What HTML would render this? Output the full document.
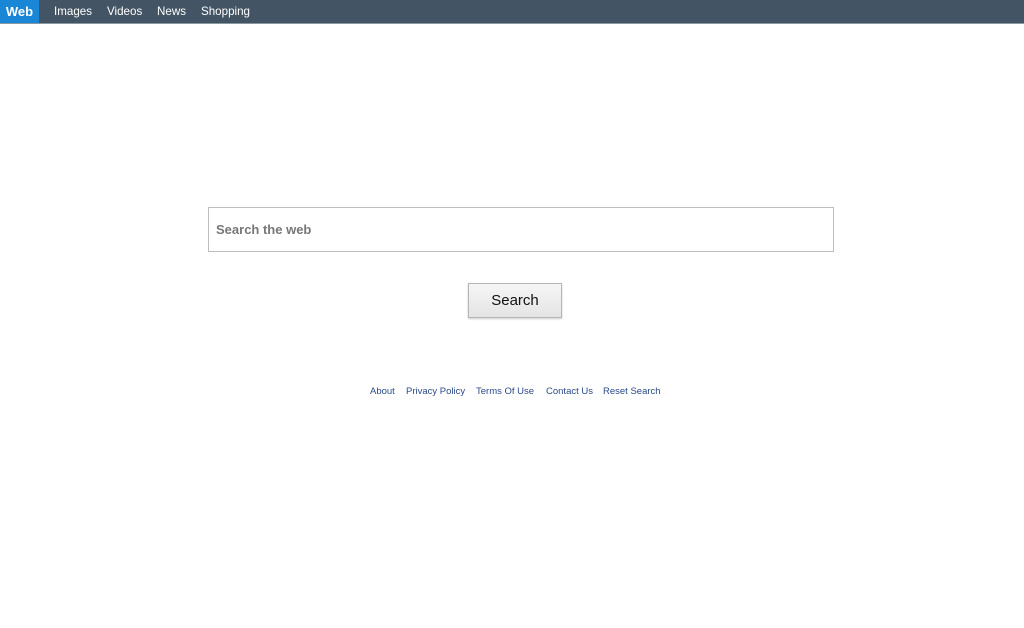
<!DOCTYPE html>
<html><head><meta charset="utf-8"><style>
body{margin:0;width:1024px;height:628px;background:#fff;font-family:"Liberation Sans",Arial,sans-serif;position:relative;overflow:hidden}
.nav{position:absolute;left:0;top:0;width:1024px;height:23px;background:#435464;border-bottom:1px solid #8a96a0}
.nav span{position:absolute;top:0;height:23px;line-height:24px;font-size:11.6px;color:#fff}
.web{background:#1a86d6;font-weight:bold;font-size:13px!important;left:0;width:39px;text-align:center}
.box{position:absolute;left:208px;top:207px;width:624px;height:43px;border:1px solid #bdbdbd}
.box span{position:absolute;left:7px;top:14px;font-size:13px;font-weight:bold;color:#777}
.btn{position:absolute;left:468px;top:283px;width:92px;height:33px;border:1px solid #b5b5b5;background:linear-gradient(#f6f6f6,#e4e4e4);box-shadow:0 1px 2px rgba(0,0,0,.2);font-size:15px;color:#111;text-align:center;line-height:34px}
.foot{position:absolute;top:386px;font-size:9.5px;color:#2b4a8a}
</style></head><body>
<div class="nav"><span class="web">Web</span><span style="left:54px">Images</span><span style="left:107px">Videos</span><span style="left:157px">News</span><span style="left:201px">Shopping</span></div>
<div class="box"><span>Search the web</span></div>
<div class="btn">Search</div>
<span class="foot" style="left:370px">About</span>
<span class="foot" style="left:406px">Privacy Policy</span>
<span class="foot" style="left:476px">Terms Of Use</span>
<span class="foot" style="left:546px">Contact Us</span>
<span class="foot" style="left:603px">Reset Search</span>
</body></html>
